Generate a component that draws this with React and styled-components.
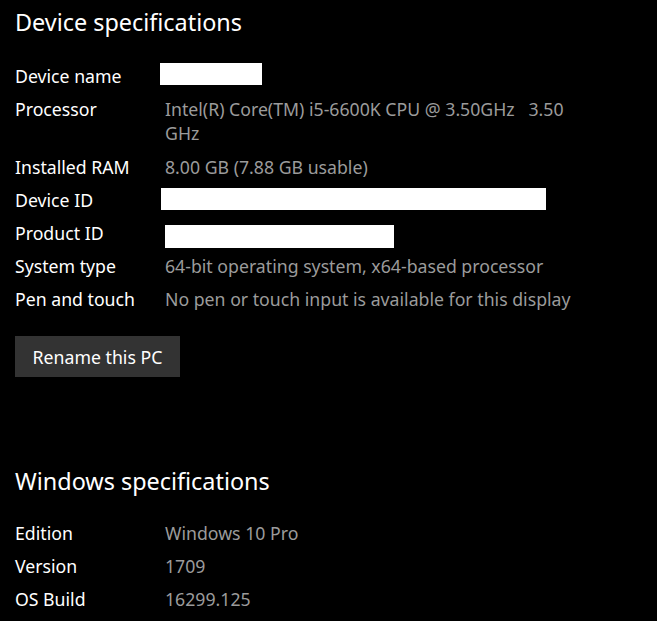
import React from 'react';
import styled, { createGlobalStyle } from 'styled-components';

const GlobalStyle = createGlobalStyle`
    html, body {
        margin: 0;
        background: #000;
    }
    body {
        font-family: "Segoe UI", "Noto Sans", "Open Sans", sans-serif;
        color: #fff;
    }
`;

const deviceSpecs = [
    { label: 'Device name', redact: { w: 102, h: 22, x: -5, y: -1 } },
    { label: 'Processor', value: ['Intel(R) Core(TM) i5-6600K CPU @ 3.50GHz   3.50', 'GHz'] },
    { label: 'Installed RAM', value: ['8.00 GB (7.88 GB usable)'] },
    { label: 'Device ID', redact: { w: 385, h: 22, x: -4, y: 0 } },
    { label: 'Product ID', redact: { w: 229, h: 23, x: 0, y: 4 } },
    { label: 'System type', value: ['64-bit operating system, x64-based processor'] },
    { label: 'Pen and touch', value: ['No pen or touch input is available for this display'] },
];

const windowsSpecs = [
    { label: 'Edition', value: ['Windows 10 Pro'] },
    { label: 'Version', value: ['1709'] },
    { label: 'OS Build', value: ['16299.125'] },
];

function SpecList({ items, gapTop }) {
    return (
        <List $top={gapTop}>
            {items.map((item) => (
                <Row key={item.label}>
                    <Label>{item.label}</Label>
                    {item.redact ? (
                        <Redacted $w={item.redact.w} $h={item.redact.h} $x={item.redact.x} $y={item.redact.y} />
                    ) : (
                        <Value $wrapped={item.value.length > 1}>
                            {item.value.map((line) => (
                                <Line key={line}>{line}</Line>
                            ))}
                        </Value>
                    )}
                </Row>
            ))}
        </List>
    );
}

export default function App() {
    return (
        <>
            <GlobalStyle />
            <Page>
                <Heading>Device specifications</Heading>
                <SpecList items={deviceSpecs} gapTop={26} />
                <RenameButton>Rename this PC</RenameButton>
                <Heading $top={88}>Windows specifications</Heading>
                <SpecList items={windowsSpecs} gapTop={24} />
            </Page>
        </>
    );
}

const Page = styled.div`
    padding: 6px 15px 0;
    display: flex;
    flex-direction: column;
    align-items: flex-start;
`;

const Heading = styled.h2`
    margin: ${(p) => p.$top || 0}px 0 0;
    font-size: 23.4px;
    font-weight: 400;
    line-height: 32px;
    color: #fff;
`;

const List = styled.div`
    margin-top: ${(p) => p.$top}px;
    display: flex;
    flex-direction: column;
    gap: 9px;
`;

const Row = styled.div`
    display: grid;
    grid-template-columns: 150px auto;
    align-items: start;
    font-size: 17.7px;
    line-height: 24px;
`;

const Label = styled.div`
    color: #fff;
    white-space: nowrap;
`;

const Value = styled.div`
    color: #9b9b9b;
    padding-bottom: ${(p) => (p.$wrapped ? 1 : 0)}px;
`;

const Line = styled.div`
    white-space: pre;
`;

const Redacted = styled.div`
    width: ${(p) => p.$w}px;
    height: ${(p) => p.$h}px;
    margin-left: ${(p) => p.$x}px;
    margin-top: ${(p) => p.$y}px;
    margin-bottom: ${(p) => 24 - p.$h - p.$y}px;
    background: #fff;
`;

const RenameButton = styled.button`
    margin-top: 25px;
    width: 165px;
    height: 41px;
    padding: 0;
    border: none;
    background: #333;
    color: #fff;
    font-family: inherit;
    font-size: 17.7px;
    cursor: pointer;
`;
